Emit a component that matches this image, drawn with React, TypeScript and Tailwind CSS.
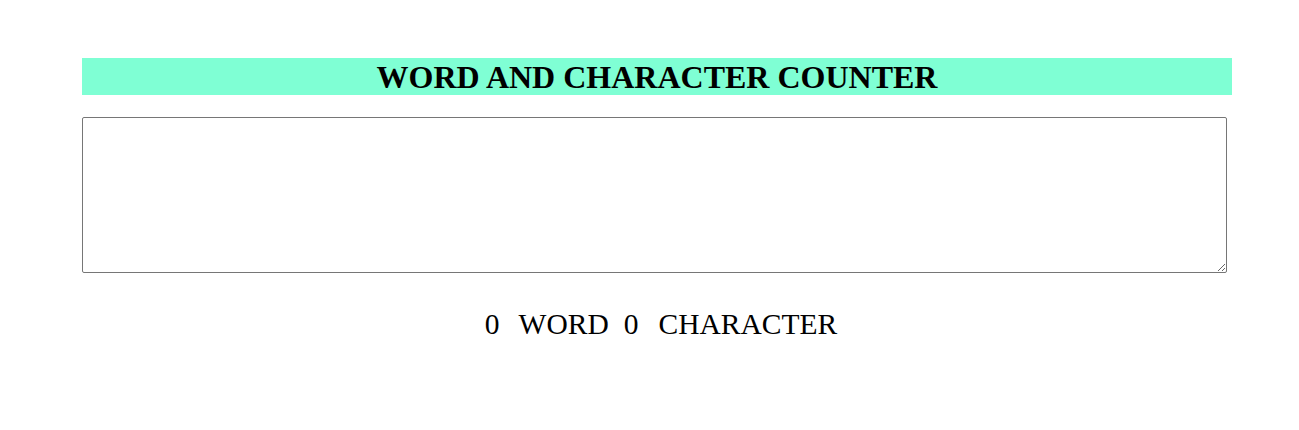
import { useState } from 'react'

export default function App() {
  const [text, setText] = useState('')

  const words = text.trim() === '' ? 0 : text.trim().split(/\s+/).length
  const chars = text.length

  return (
    <div className="min-h-[430px] bg-white pt-[58px] pl-[82px] pr-[67px] font-['Liberation_Serif',serif] text-black">
      <h1 className="bg-[#7fffd4] h-[37px] flex items-center justify-center text-[32px] font-bold leading-none">
        WORD AND CHARACTER COUNTER
      </h1>

      <textarea
        value={text}
        onChange={(e) => setText(e.target.value)}
        className="block mt-[22px] w-[1145px] h-[156px] border border-[#767676] rounded-[2px] bg-white p-[2px] text-[13px] font-['Liberation_Mono',monospace]"
      />

      <div className="mt-[34px] flex justify-center pl-[8px] text-[29.5px] leading-[34px]">
        <span>{words}</span>
        <span className="ml-[19px]">WORD</span>
        <span className="ml-[15px]">{chars}</span>
        <span className="ml-[20px]">CHARACTER</span>
      </div>
    </div>
  )
}
